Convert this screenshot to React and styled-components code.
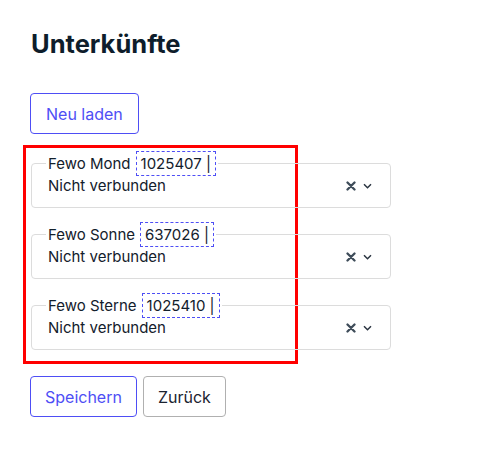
import React from 'react'
import styled, { createGlobalStyle } from 'styled-components'

const GlobalStyle = createGlobalStyle`
    body {
        margin: 0;
        background: #ffffff;
        font-family: Inter, "Liberation Sans", sans-serif;
        color: #13202c;
    }
`

const listings = [
    { name: 'Fewo Mond', id: '1025407' },
    { name: 'Fewo Sonne', id: '637026' },
    { name: 'Fewo Sterne', id: '1025410' },
]

const App = () => {
    return (
        <Page>
            <GlobalStyle />
            <Title>Unterkünfte</Title>
            <Button $primary $pad={15}>Neu laden</Button>
            <Highlight>
                {listings.map((item) => (
                    <Field key={item.id}>
                        <Legend>
                            {item.name}
                            <IdTag>{item.id} |</IdTag>
                        </Legend>
                        <Row>
                            <Status>Nicht verbunden</Status>
                            <Indicators>
                                <svg width="10" height="10" viewBox="0 0 10 10">
                                    <path d="M1.5 1.5 L8.5 8.5 M8.5 1.5 L1.5 8.5" stroke="#3e4c59" strokeWidth="2.3" strokeLinecap="round" />
                                </svg>
                                <svg width="9" height="6" viewBox="0 0 9 6">
                                    <path d="M1 1.2 L4.5 4.7 L8 1.2" fill="none" stroke="#2a3440" strokeWidth="1.5" />
                                </svg>
                            </Indicators>
                        </Row>
                    </Field>
                ))}
            </Highlight>
            <Actions>
                <Button $primary>Speichern</Button>
                <Button>Zurück</Button>
            </Actions>
        </Page>
    )
}

export default App

const Page = styled.div`
    padding: 27px 30px;
    display: flex;
    flex-direction: column;
    align-items: flex-start;
`

const Title = styled.h1`
    margin: 0 0 32px 1px;
    font-size: 25.5px;
    font-weight: 700;
    color: #0e1d2b;
    line-height: 34px;
`

const Button = styled.button`
    height: 41px;
    padding: 0 ${(p) => p.$pad || 14}px;
    border-radius: 4px;
    background: #ffffff;
    font-family: inherit;
    font-size: 16px;
    border: 1px solid ${(p) => (p.$primary ? '#4e4ef5' : '#b0b0b0')};
    color: ${(p) => (p.$primary ? '#4e4ef5' : '#1b2330')};
`

const Highlight = styled.div`
    margin: 11px 0 0 -7px;
    width: 275px;
    box-sizing: border-box;
    border: 3px solid #ff0000;
    padding: 3px 5px 11px;
    display: flex;
    flex-direction: column;
    gap: 14px;
`

const Field = styled.fieldset`
    flex: none;
    width: 360px;
    box-sizing: border-box;
    margin: 0;
    padding: 0 18px 11px 16px;
    border: 1px solid #dcdcdc;
    border-radius: 4px;
`

const Legend = styled.legend`
    padding: 0 2px;
    margin-left: -2px;
    font-size: 15px;
    display: flex;
    align-items: center;
    gap: 5px;
`

const IdTag = styled.span`
    border: 1px dashed #4e4ef5;
    padding: 3px 4px;
    line-height: 17px;
`

const Row = styled.div`
    display: flex;
    align-items: center;
    justify-content: space-between;
`

const Status = styled.div`
    font-size: 15px;
    line-height: 20px;
`

const Indicators = styled.div`
    display: flex;
    align-items: center;
    gap: 7px;
    margin-top: -1px;
`

const Actions = styled.div`
    margin-top: 12px;
    display: flex;
    gap: 6px;
`
